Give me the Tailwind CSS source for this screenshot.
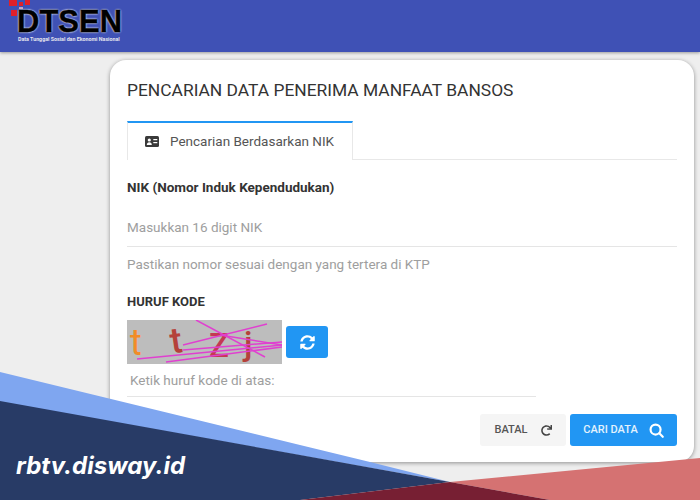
<!DOCTYPE html>
<html lang="en">
<head>
    <meta charset="UTF-8">
    <title>DTSEN</title>
    <script src="https://cdn.jsdelivr.net/npm/@tailwindcss/browser@4"></script>
</head>
<body class="relative w-[700px] h-[500px] overflow-hidden bg-[#eeeeee] font-['Roboto',sans-serif]">
    <!-- header -->
    <header class="relative h-[52px] bg-[#3f51b5] shadow-[0_1px_3px_rgba(0,0,0,0.35)]">
        <svg class="absolute left-[9px] top-0" width="22" height="17" viewBox="0 0 22 17">
            <rect x="0" y="0" width="8" height="6" fill="#e0202a"/>
            <rect x="10" y="2" width="4" height="4" fill="#e0202a"/>
            <rect x="16" y="0" width="5" height="5" fill="#e0202a"/>
            <rect x="2" y="10" width="6" height="6" fill="#e0202a"/>
            <rect x="10" y="7" width="4" height="2" fill="#c8a0c0"/>
        </svg>
        <div class="absolute left-[17px] top-[8px] text-[31px] leading-[27px] font-bold text-black font-['Liberation_Sans',sans-serif] [-webkit-text-stroke:0.5px_#000] [text-shadow:0_0_2px_#fff,0_0_2px_#fff]">DTSEN</div>
        <div class="absolute left-[18px] top-[36px] text-[5.300px] leading-[7px] font-bold text-[#e4e4ee] whitespace-nowrap">Data Tunggal Sosial dan Ekonomi Nasional</div>
    </header>

    <!-- card -->
    <main class="ml-[110px] mt-2 w-[584px] h-[402px] bg-white rounded-2xl shadow-[0_1px_4px_rgba(0,0,0,0.4)] pt-[19px] pl-[17px] pr-[17px] flex flex-col">
        <h1 class="text-[17.400px] leading-[22px] text-[#333333]">PENCARIAN DATA PENERIMA MANFAAT BANSOS</h1>

        <div class="mt-5 flex border-b border-[#e8e8e8] h-[39px]">
            <div class="w-[226px] h-[39px] border-t-2 border-x border-t-[#2196f3] border-x-[#e8e8e8] bg-white flex items-center pl-[17px] gap-[11px] text-[13.500px] text-[#555555]">
                <svg width="14" height="11" viewBox="0 0 14 11">
                    <rect width="14" height="11" rx="1.500" fill="#3a3a3a"/>
                    <circle cx="4.300" cy="4" r="1.600" fill="#fff"/>
                    <path d="M1.800 9c0-2 1-2.800 2.500-2.800S6.800 7 6.800 9z" fill="#fff"/>
                    <rect x="8.300" y="3" width="4" height="1.200" fill="#fff"/>
                    <rect x="8.300" y="6" width="4" height="1.200" fill="#fff"/>
                </svg>
                <span>Pencarian Berdasarkan NIK</span>
            </div>
        </div>

        <label class="mt-[19px] text-[13.500px] leading-4 font-bold text-[#333333]">NIK (Nomor Induk Kependudukan)</label>
        <div class="mt-[24px] h-[28px] border-b border-[#e5e5e5] text-[13.500px] leading-4 text-[#9e9e9e]">Masukkan 16 digit NIK</div>
        <p class="mt-[9px] text-[13.500px] leading-4 text-[#9e9e9e]">Pastikan nomor sesuai dengan yang tertera di KTP</p>

        <div class="mt-[22px] text-[13px] leading-4 font-bold text-[#333333]">HURUF KODE</div>

        <div class="mt-[10px] flex items-center gap-1">
            <svg width="155" height="44" viewBox="0 0 155 44" class="bg-[#bdbdbd]">
                <text x="3" y="35" font-family="Roboto, sans-serif" font-size="36" fill="#f28c28">t</text>
                <text x="43" y="33" font-family="Roboto, sans-serif" font-size="36" font-weight="500" fill="#b5413a" transform="rotate(-8 48 20)">t</text>
                <text x="82" y="37" font-family="Roboto, sans-serif" font-size="33" font-weight="500" fill="#c43a52">Z</text>
                <text x="117" y="35" font-family="Roboto, sans-serif" font-size="34" font-weight="500" fill="#b5413a">j</text>
                <g stroke="#e040d0" stroke-width="1.500" fill="none">
                    <path d="M69 0L138 37"/>
                    <path d="M56 25L140 4"/>
                    <path d="M56 30L155 22"/>
                    <path d="M10 39L155 25"/>
                    <path d="M39 42L155 27"/>
                    <path d="M93 15L155 25"/>
                </g>
            </svg>
            <button class="w-[42px] h-[32px] bg-[#2196f3] rounded-[3px] flex items-center justify-center">
                <svg width="15" height="15" viewBox="0 0 512 512" fill="#fff">
                    <path d="M370.72 133.28C339.458 104.008 298.888 87.962 255.848 88c-77.458.068-144.328 53.178-162.791 126.85-1.344 5.363-6.122 9.15-11.651 9.15H24.103c-7.498 0-13.194-6.807-11.807-14.176C33.933 94.924 134.813 8 256 8c66.448 0 126.791 26.136 171.315 68.685L463.03 40.97C478.149 25.851 504 36.559 504 57.941V192c0 13.255-10.745 24-24 24H345.941c-21.382 0-32.09-25.851-16.971-40.971l41.75-41.749zM32 296h134.059c21.382 0 32.09 25.851 16.971 40.971l-41.75 41.75c31.262 29.273 71.835 45.319 114.876 45.28 77.418-.07 144.315-53.144 162.787-126.849 1.344-5.363 6.122-9.15 11.651-9.15h57.304c7.498 0 13.194 6.807 11.807 14.176C478.067 417.076 377.187 504 256 504c-66.448 0-126.791-26.136-171.315-68.685L48.97 471.03C33.851 486.149 8 475.441 8 454.059V320c0-13.255 10.745-24 24-24z"/>
                </svg>
            </button>
        </div>

        <p class="mt-[8px] ml-[3px] text-[13.500px] leading-4 text-[#9e9e9e]">Ketik huruf kode di atas:</p>
        <div class="mt-[8px] w-[409px] border-b border-[#e5e5e5]"></div>

        <div class="mt-[17px] flex justify-end gap-[4px]">
            <button class="w-[86px] h-[32px] bg-[#f5f5f5] rounded-[3px] flex items-center justify-center gap-[13px] text-[11px] font-medium text-[#555555]">
                <span>BATAL</span>
                <svg width="11" height="11" viewBox="0 0 512 512" fill="#444">
                    <path d="M500.33 0h-47.41a12 12 0 0 0-12 12.57l4 82.76A247.42 247.42 0 0 0 256 8C119.34 8 7.900 119.530 8 256.190 8.100 393.070 119.100 504 256 504a247.100 247.100 0 0 0 166.180-63.910 12 12 0 0 0 .480-17.430l-34-34a12 12 0 0 0-16.380-.550A176 176 0 1 1 402.100 157.800l-101.530-4.870a12 12 0 0 0-12.570 12v47.410a12 12 0 0 0 12 12h200.330a12 12 0 0 0 12-12V12a12 12 0 0 0-12-12z"/>
                </svg>
            </button>
            <button class="w-[107px] h-[32px] bg-[#2196f3] rounded-[3px] flex items-center justify-center gap-[11px] text-[11px] font-medium text-[#e3f2fd]">
                <span>CARI DATA</span>
                <svg width="15" height="15" viewBox="0 0 24 24" fill="none" stroke="#fff" stroke-width="3.500" stroke-linecap="round">
                    <circle cx="10.500" cy="10.500" r="8"/>
                    <path d="M16.500 16.500L22 22"/>
                </svg>
            </button>
        </div>
    </main>

    <!-- banner across the bottom -->
    <svg class="absolute left-0 top-0" width="700" height="500" viewBox="0 0 700 500">
        <polygon points="0,372 300,445 370,462 450,482 0,402" fill="#7fa6f0"/>
        <polygon points="450,482 700,458 700,500 550,500" fill="#d57272"/>
        <polygon points="0,401 300,455 450,482 300,500 0,500" fill="#283b66"/>
        <polygon points="450,482 550,500 300,500" fill="#771f33"/>
    </svg>
    <div class="absolute left-[16px] top-[451px] text-[24px] leading-[30px] font-bold italic text-white font-['Inter',sans-serif]">rbtv.disway.id</div>
</body>
</html>
